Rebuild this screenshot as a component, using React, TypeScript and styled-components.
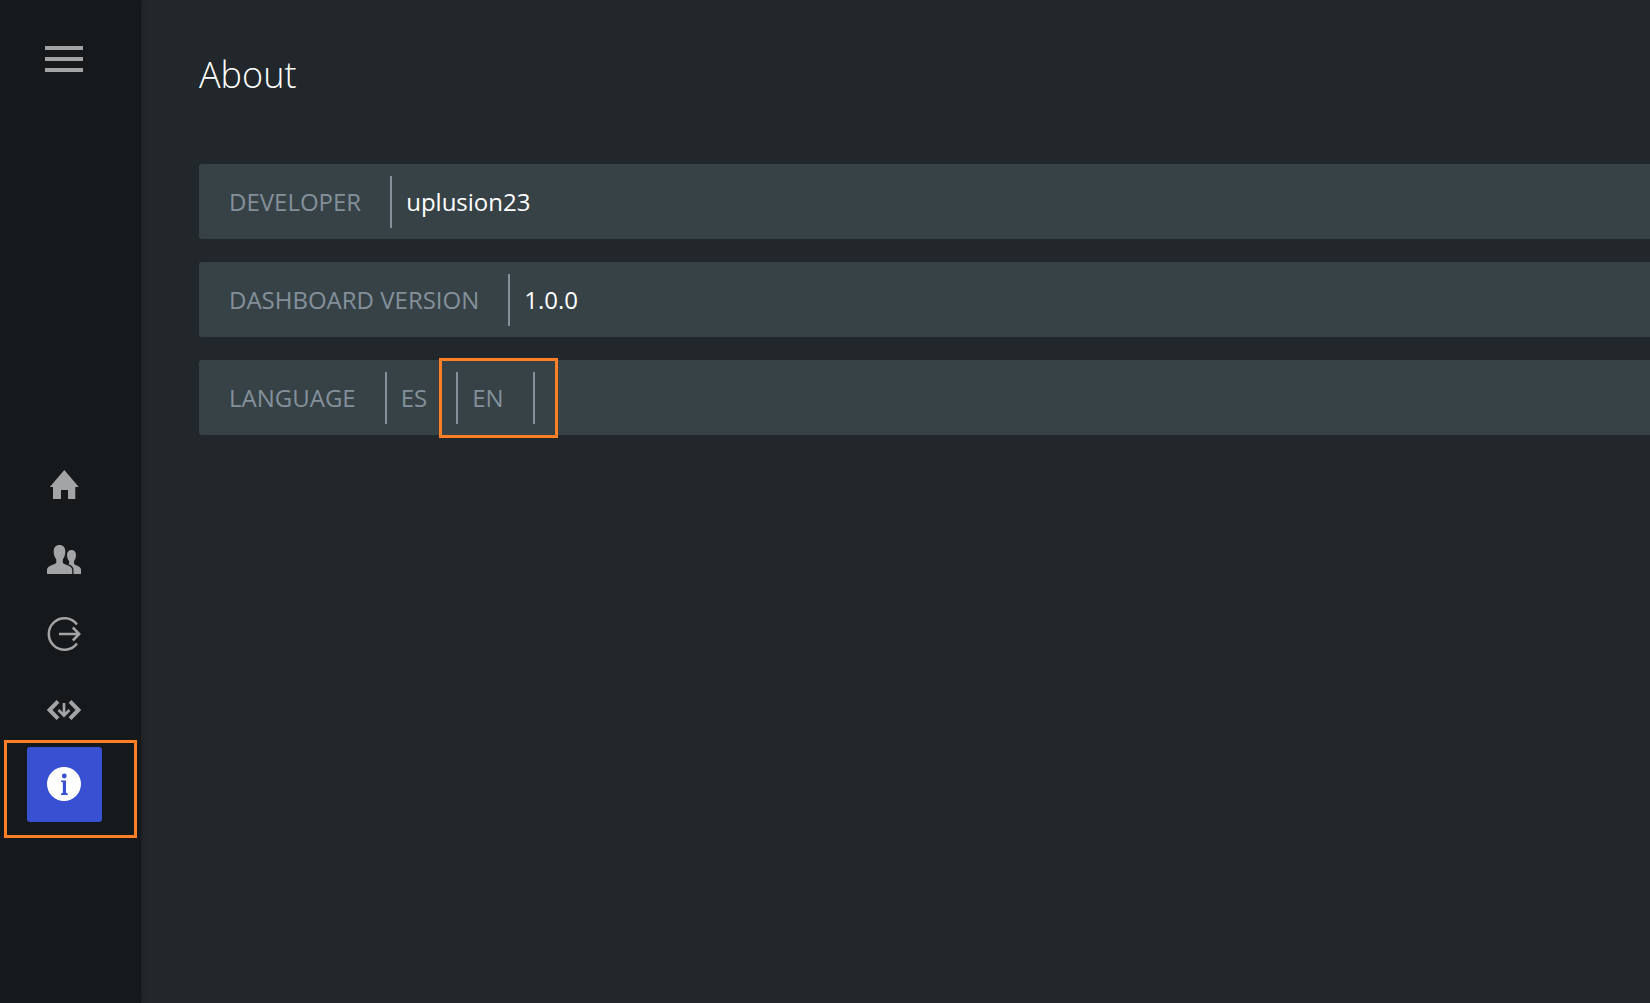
import React from "react";
import styled, { createGlobalStyle } from "styled-components";

const GlobalStyle = createGlobalStyle`
  * { box-sizing: border-box; }
  body {
    margin: 0;
    background: #22272b;
    color: #ffffff;
    font-family: "Open Sans", "Noto Sans", sans-serif;
    font-size: 24px;
    line-height: 32px;
    overflow-x: hidden;
  }
`;

const Layout = styled.div`
  display: flex;
  min-height: 100vh;
`;

const Sidebar = styled.aside`
  flex: none;
  width: 141px;
  padding: 22px 27px;
  background: #16191c;
  box-shadow: 0 0 4px #16191c;
`;

const NavButton = styled.button<{ $active?: boolean }>`
  display: grid;
  place-items: center;
  width: 75px;
  height: 75px;
  padding: 0 1px 1px 0;
  border: 0;
  border-radius: 3px;
  background: ${(p) => (p.$active ? "#3850d2" : "transparent")};
  color: ${(p) => (p.$active ? "#ffffff" : "#a2a4a5")};
  cursor: pointer;

  svg {
    display: block;
    fill: currentColor;
  }
`;

const Nav = styled.nav`
  display: flex;
  flex-direction: column;
  align-items: flex-start;
  margin-top: 350px;
`;

const Marked = styled.div`
  position: relative;
`;

const Outline = styled.span<{ $inset: string }>`
  position: absolute;
  inset: ${(p) => p.$inset};
  border: 3px solid #ff7f27;
  pointer-events: none;
`;

const Main = styled.main`
  flex: 1;
  min-width: 0;
  padding: 50px 0 50px 58px;
`;

const Title = styled.h1`
  margin: 0 0 64px;
  font-size: 36px;
  line-height: 50px;
  font-weight: 300;
`;

const List = styled.div`
  display: flex;
  flex-direction: column;
  gap: 23px;
`;

const Row = styled.section`
  display: flex;
  align-items: center;
  height: 75px;
  padding: 0 30px;
  border-radius: 3px 0 0 3px;
  background: #374247;
`;

const Label = styled.span`
  padding-right: 29px;
  color: #84909a;
  text-transform: uppercase;
`;

const Value = styled.span`
  padding: 10px 14px;
  border-left: 2px solid #84909a;
`;

const Language = styled.button<{ $last?: boolean }>`
  padding: 10px 29px 10px 14px;
  border: 0 solid #84909a;
  border-width: 0 ${(p) => (p.$last ? 2 : 0)}px 0 2px;
  background: none;
  color: #84909a;
  font: inherit;
  cursor: pointer;
`;

const MenuIcon = () => (
  <svg width="38" height="26" viewBox="0 0 38 26">
    <path d="M0 0h38v4H0zM0 11h38v4H0zM0 22h38v4H0z" />
  </svg>
);

const HomeIcon = () => (
  <svg width="34" height="34" viewBox="0 0 34 34">
    <path d="M17.300 3 31.800 20H28.300v12h-7.300v-9h-7v9H6V20H2.800z" />
  </svg>
);

const UsersIcon = () => (
  <svg width="34" height="34" viewBox="0 -1 34 34">
    <path d="M12.500 2c3.800 0 5.800 2.500 5.800 6.500 0 3.500-1 5.800-2.500 8v3c0 2.200 9.400 2.600 9.400 7.500v4H0v-4c0-4.900 9.300-5.300 9.300-7.500v-3c-1.500-2.200-2.600-4.500-2.600-8C6.700 4.500 8.700 2 12.500 2z" />
    <path d="M24.500 7c3 0 4.500 2 4.500 5 0 2.800-.8 4.500-2 6.200v2.300c0 1.800 7 2.200 7 6V31h-7.500v-4c0-3-2.500-4.800-5.200-5.900.6-.4.900-.8.900-1.300v-1.600c-1.300-1.700-2.200-3.600-2.200-6.200 0-3 1.500-5 4.500-5z" />
  </svg>
);

const ExitIcon = () => (
  <svg width="34" height="34" viewBox="0 0 34 34">
    <g fill="none" stroke="currentColor" strokeWidth="2.500">
      <path d="M30 7.500A15.700 15.700 0 1 0 30 26.500" />
      <path d="M12 17h20M25.800 10.500 32.200 17l-6.400 6.500" />
    </g>
  </svg>
);

const CodeIcon = () => (
  <svg width="34" height="34" viewBox="0 0 34 34">
    <g fill="none" stroke="currentColor">
      <path d="M11 9.300 2.600 18 11 26.700M23 9.300 31.400 18 23 26.700" strokeWidth="4" />
      <path d="M17 11v12M11.500 18 17 23.500l5.500-5.500" strokeWidth="2.700" />
    </g>
  </svg>
);

const InfoIcon = () => (
  <svg width="34" height="34" viewBox="0 0 34 34">
    <circle cx="17" cy="17" r="17" />
    <g fill="#3850d2">
      <circle cx="17.300" cy="9" r="2.400" />
      <path d="M14 13.500h5v12.300l1.800.9V28H14v-1.300l1.800-.9V15.300L14 14.800z" />
    </g>
  </svg>
);

export default function App() {
  return (
    <>
      <GlobalStyle />
      <Layout>
        <Sidebar>
          <NavButton aria-label="Menu"><MenuIcon /></NavButton>
          <Nav>
            <NavButton aria-label="Home"><HomeIcon /></NavButton>
            <NavButton aria-label="Users"><UsersIcon /></NavButton>
            <NavButton aria-label="Log out"><ExitIcon /></NavButton>
            <NavButton aria-label="Code"><CodeIcon /></NavButton>
            <Marked>
              <NavButton $active aria-label="About"><InfoIcon /></NavButton>
              <Outline $inset="-7px -35px -16px -23px" />
            </Marked>
          </Nav>
        </Sidebar>
        <Main>
          <Title>About</Title>
          <List>
            <Row>
              <Label>Developer</Label>
              <Value>uplusion23</Value>
            </Row>
            <Row>
              <Label>Dashboard version</Label>
              <Value>1.0.0</Value>
            </Row>
            <Row>
              <Label>Language</Label>
              <Language>ES</Language>
              <Marked>
                <Language $last>EN</Language>
                <Outline $inset="-14px -23px -14px -17px" />
              </Marked>
            </Row>
          </List>
        </Main>
      </Layout>
    </>
  );
}
